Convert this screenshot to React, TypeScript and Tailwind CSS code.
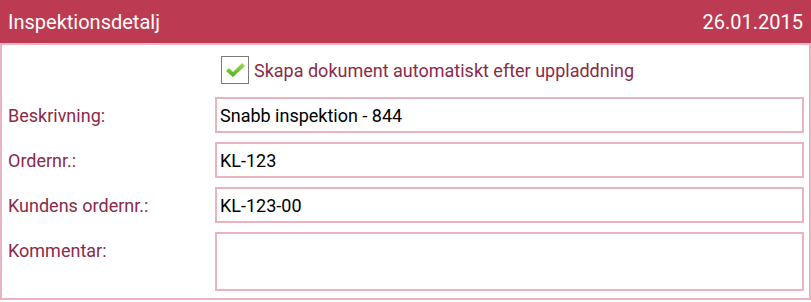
import React from "react";

const rows = [
  { label: "Beskrivning:", value: "Snabb inspektion - 844" },
  { label: "Ordernr.:", value: "KL-123" },
  { label: "Kundens ordernr.:", value: "KL-123-00" },
];

export default function App() {
  return (
    <div className="w-[811px] h-[302px] bg-white" style={{ fontFamily: "Roboto, 'Liberation Sans', sans-serif" }}>
      <div className="h-[43px] bg-[#bc3a52] flex items-center justify-between pl-[8px] pr-[8px] text-white text-[20px]">
        <span>Inspektionsdetalj</span>
        <span>26.01.2015</span>
      </div>
      <div className="h-[257px] border-t-[2px] border-x-[2px] border-b-[2px] border-[#eab3c0] pt-[11px] pr-[5px]">
        <div className="flex items-center ml-[219px] h-[28px]">
          <div className="w-[28px] h-[28px] border border-[#7a7a7a] bg-white flex items-center justify-center">
            <svg width="22" height="20" viewBox="0 0 22 20">
              <defs>
                <linearGradient id="g" x1="0" y1="0" x2="0" y2="1">
                  <stop offset="0" stopColor="#9be04a" />
                  <stop offset="1" stopColor="#4cae1c" />
                </linearGradient>
              </defs>
              <path d="M2 11 L5 8 L9 12 L18 3 L21 6 L9 17 Z" fill="url(#g)" />
            </svg>
          </div>
          <span className="ml-[5px] text-[18px] text-[#8a2a4a]">Skapa dokument automatiskt efter uppladdning</span>
        </div>
        <div className="mt-[13px] flex flex-col gap-[9px]">
          {rows.map((r) => (
            <div key={r.label} className="flex items-center">
              <div className="w-[213px] pl-[6px] text-[18px] text-[#8a2a4a]">{r.label}</div>
              <div className="flex-1 h-[36px] border-[2px] border-[#eab3c0] flex items-center pl-[3px] text-[18px] text-black">
                {r.value}
              </div>
            </div>
          ))}
          <div className="flex items-start">
            <div className="w-[213px] pl-[6px] pt-[5px] text-[18px] text-[#8a2a4a]">Kommentar:</div>
            <div className="flex-1 h-[59px] border-[2px] border-[#eab3c0]" />
          </div>
        </div>
      </div>
    </div>
  );
}
